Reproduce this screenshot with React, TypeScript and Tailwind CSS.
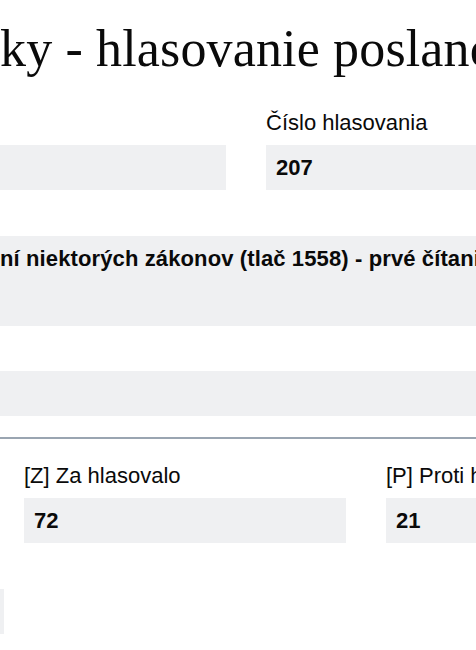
import React from 'react';

const Field = ({ label, value, className = '' }: { label: string; value?: string; className?: string }) => (
  <div className={`flex flex-col shrink-0 ${className}`}>
    <label className="text-[22px] leading-[25px] whitespace-nowrap">{label}</label>
    <div className="mt-[10px] h-[45px] px-[10px] flex items-center bg-[#eff0f2] font-bold text-[22px] whitespace-nowrap">
      {value}
    </div>
  </div>
);

export default function App() {
  return (
    <div className="w-[476px] h-[650px] overflow-hidden bg-white text-[#0a0a0a] font-['Liberation_Sans',Arial,sans-serif]">
      {/* Page heading, crop starts mid-word */}
      <h1 className="pt-[19px] flex whitespace-nowrap font-['Liberation_Serif','Times_New_Roman',serif] text-[52px] leading-[60px] font-normal">
        <span className="w-0 flex justify-end">Národná rada Slovenskej republi</span>
        <span className="tracking-[0.15px]">ky - hlasovanie poslancov</span>
      </h1>

      {/* Vote header */}
      <div className="mt-[31px] -ml-[300px] flex gap-10">
        <Field label="Schôdza" value="89" className="w-[526px]" />
        <Field label="Číslo hlasovania" value="207" className="w-[526px]" />
      </div>

      <div className="mt-[11px] -ml-[300px] w-[1100px] flex flex-col">
        <label className="text-[22px] leading-[25px]">Názov hlasovania</label>
        <div className="mt-[10px] h-[90px] px-[10px] pt-[10px] bg-[#eff0f2] font-bold text-[22px] leading-[25px] flex whitespace-nowrap">
          <span className="w-[290px] shrink-0 flex justify-end">Vládny návrh zákona o zmene a dopl</span>
          <span className="tracking-[0.12px]">ní niektorých zákonov (tlač 1558) - prvé čítanie</span>
        </div>
      </div>

      <div className="mt-[10px] -ml-[300px] w-[1100px]">
        <Field label="Dátum a čas" value="31. 1. 2023 11:05" className="w-full" />
      </div>

      <div className="mt-[21px] h-[2px] bg-[#9aa5b1]" />

      {/* Results */}
      <div className="pt-6 pl-6 flex gap-10">
        <Field label="[Z] Za hlasovalo" value="72" className="w-[322px]" />
        <Field label="[P] Proti hlasovalo" value="21" className="w-[322px]" />
        <Field label="[?] Zdržalo sa" value="12" className="w-[322px]" />
      </div>

      <div className="mt-[11px] -ml-[318px] flex">
        <Field label="[0] Neprítomní" value="" className="w-[322px]" />
      </div>
    </div>
  );
}
